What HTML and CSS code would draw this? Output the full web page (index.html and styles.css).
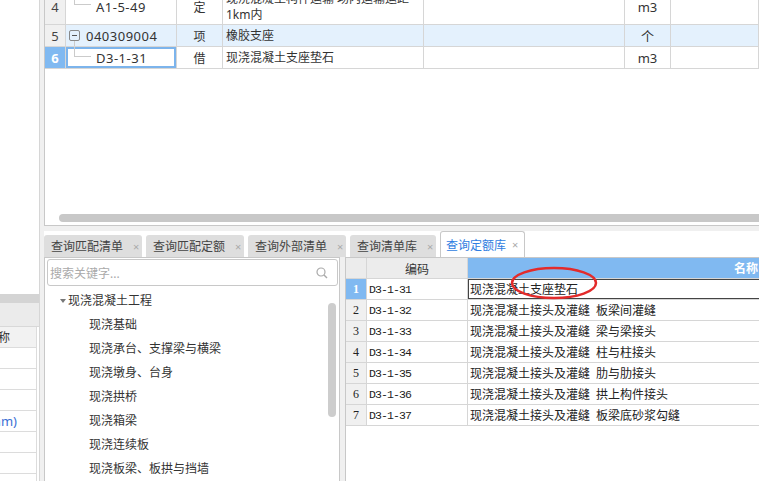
FILE: index.html
```html
<!DOCTYPE html>
<html lang="zh-CN">
<head>
  <meta charset="UTF-8">
  <meta name="viewport" content="width=device-width, initial-scale=1.0">
  <title>查询定额库</title>
  <link rel="stylesheet" href="styles.css">
</head>
<body>
  <div class="app">
    <!-- left property list, mostly scrolled off -->
    <aside class="side">
      <div class="side-top"></div>
      <div class="side-bar1"></div>
      <div class="side-bar2"></div>
      <div class="side-head"><span>名称</span></div>
      <div class="side-row"></div>
      <div class="side-row"></div>
      <div class="side-row"></div>
      <div class="side-row link"><span>(100mm)</span></div>
      <div class="side-row"></div>
      <div class="side-row"></div>
      <div class="side-row"></div>
    </aside>

    <main class="main">
      <!-- upper grid -->
      <section class="top-panel">
        <div class="rows">
          <div class="row tall">
            <div class="num">4</div>
            <div class="code"><span class="elbow"></span>A1-5-49</div>
            <div class="type">定</div>
            <div class="name">现浇混凝土构件运输 场内运输运距<br>1km内</div>
            <div></div>
            <div class="unit">m3</div>
            <div></div>
          </div>
          <div class="row hl">
            <div class="num">5</div>
            <div class="code"><span class="toggle"></span>040309004</div>
            <div class="type">项</div>
            <div class="name">橡胶支座</div>
            <div></div>
            <div class="unit">个</div>
            <div></div>
          </div>
          <div class="row cur">
            <div class="num">6</div>
            <div class="code sel"><span class="elbow"></span>D3-1-31</div>
            <div class="type">借</div>
            <div class="name">现浇混凝土支座垫石</div>
            <div></div>
            <div class="unit">m3</div>
            <div></div>
          </div>
        </div>
        <div class="hscroll"></div>
      </section>

      <!-- query tabs -->
      <nav class="tabs">
        <div class="tab">查询匹配清单<span class="x">×</span></div>
        <div class="tab">查询匹配定额<span class="x">×</span></div>
        <div class="tab">查询外部清单<span class="x">×</span></div>
        <div class="tab">查询清单库<span class="x">×</span></div>
        <div class="tab on">查询定额库<span class="x">×</span></div>
      </nav>

      <section class="bottom">
        <div class="tree-panel">
          <div class="search">
            <span>搜索关键字...</span>
            <svg width="12" height="12" viewBox="0 0 12 12">
              <circle cx="5" cy="5" r="4" fill="none" stroke="#aaa" stroke-width="1.2"/>
              <line x1="8" y1="8" x2="11" y2="11" stroke="#aaa" stroke-width="1.4"/>
            </svg>
          </div>
          <div class="tree-body">
            <ul class="tree">
              <li class="root"><span class="caret"></span>现浇混凝土工程</li>
              <li>现浇基础</li>
              <li>现浇承台、支撑梁与横梁</li>
              <li>现浇墩身、台身</li>
              <li>现浇拱桥</li>
              <li>现浇箱梁</li>
              <li>现浇连续板</li>
              <li>现浇板梁、板拱与挡墙</li>
            </ul>
            <div class="vscroll"></div>
          </div>
        </div>

        <div class="quota">
          <div class="qrow qhead">
            <div class="qnum"></div>
            <div class="qcode">编码</div>
            <div class="qname">名称</div>
          </div>
          <div class="qrow cur">
            <div class="qnum">1</div>
            <div class="qcode">D3-1-31</div>
            <div class="qname">现浇混凝土支座垫石</div>
          </div>
          <div class="qrow">
            <div class="qnum">2</div>
            <div class="qcode">D3-1-32</div>
            <div class="qname">现浇混凝土接头及灌缝&ensp;板梁间灌缝</div>
          </div>
          <div class="qrow">
            <div class="qnum">3</div>
            <div class="qcode">D3-1-33</div>
            <div class="qname">现浇混凝土接头及灌缝&ensp;梁与梁接头</div>
          </div>
          <div class="qrow">
            <div class="qnum">4</div>
            <div class="qcode">D3-1-34</div>
            <div class="qname">现浇混凝土接头及灌缝&ensp;柱与柱接头</div>
          </div>
          <div class="qrow">
            <div class="qnum">5</div>
            <div class="qcode">D3-1-35</div>
            <div class="qname">现浇混凝土接头及灌缝&ensp;肋与肋接头</div>
          </div>
          <div class="qrow">
            <div class="qnum">6</div>
            <div class="qcode">D3-1-36</div>
            <div class="qname">现浇混凝土接头及灌缝&ensp;拱上构件接头</div>
          </div>
          <div class="qrow">
            <div class="qnum">7</div>
            <div class="qcode">D3-1-37</div>
            <div class="qname">现浇混凝土接头及灌缝&ensp;板梁底砂浆勾缝</div>
          </div>

          <!-- red hand-drawn mark -->
          <svg class="mark" width="100" height="36" viewBox="0 0 100 36">
            <ellipse cx="49" cy="18" rx="42" ry="15" fill="none" stroke="#e32b2b" stroke-width="2.5"/>
          </svg>
        </div>
      </section>
    </main>
  </div>
</body>
</html>
```

FILE: styles.css
```css
body {
  margin: 0;
  width: 759px;
  height: 481px;
  overflow: hidden;
  background-color: #f0f0f0;
  font-family: "Noto Sans", "Noto Sans CJK SC", sans-serif;
  font-size: 12px;
  color: #333;
}

.app {
  display: flex;
  height: 481px;
}

/* left strip */
.side {
  width: 40px;
  flex: none;
  box-sizing: border-box;
  background-color: #fff;
  border-right: 1px solid #d6d6d6;
  display: flex;
  flex-direction: column;
  overflow: hidden;
}

.side > div {
  flex: none;
}

.side-top {
  height: 294px;
}

.side-bar1 {
  height: 9px;
  background-color: #d4d4d4;
}

.side-bar2 {
  height: 23px;
  background-color: #ebebeb;
  border-bottom: 1px solid #d8d8d8;
}

.side-head, .side-row {
  height: 20px;
  margin-right: 2px;
  border-right: 1px solid #dcdcdc;
  border-bottom: 1px solid #dcdcdc;
  display: flex;
  justify-content: flex-end;
  align-items: center;
  overflow: hidden;
  white-space: nowrap;
  padding-right: 26px;
}

.side-head {
  background-color: #f2f2f2;
}

.side-row.link {
  color: #3b6fd4;
  font-size: 13px;
  padding-right: 19px;
}

/* main column */
.main {
  flex: 1;
  min-width: 0;
  margin-left: 4px;
  display: flex;
  flex-direction: column;
}

.top-panel {
  height: 226px;
  flex: none;
  box-sizing: border-box;
  background-color: #fff;
  border-left: 1px solid #c8c8c8;
  border-bottom: 1px solid #c8c8c8;
  display: flex;
  flex-direction: column;
  overflow: hidden;
}

.rows {
  margin-top: -10px;
}

.row {
  display: grid;
  grid-template-columns: 21px 111px 46px 201px 201px 46px 1fr;
  height: 22px;
}

.row.tall {
  height: 35px;
}

.row > div {
  box-sizing: border-box;
  border-right: 1px solid #d6d6d6;
  border-bottom: 1px solid #d6d6d6;
  display: flex;
  align-items: center;
  overflow: hidden;
  white-space: nowrap;
}

.row .num {
  justify-content: center;
  background-color: #f0f0f0;
  font-size: 13px;
  color: #444;
}

.row.hl > div:not(.num) {
  background-color: #e4f1fd;
}

.row.cur .num {
  background-color: #80b9f1;
  color: #fff;
  font-weight: bold;
}

.row .code {
  font-size: 13px;
  letter-spacing: 0.5px;
}

.row .code.sel {
  box-shadow: inset 0 0 0 2px #7cb4ec;
}

.row .type, .row .unit {
  justify-content: center;
}

.row .unit {
  font-size: 13px;
}

.row .name {
  padding-left: 3px;
  line-height: 16px;
}

.elbow {
  align-self: flex-start;
  flex: none;
  width: 16px;
  height: 9px;
  margin: 0 5px 0 8px;
  border-left: 1px solid #cbcbcb;
  border-bottom: 1px solid #cbcbcb;
}

.tall .elbow {
  height: 14px;
}

.toggle {
  position: relative;
  flex: none;
  width: 11px;
  height: 11px;
  box-sizing: border-box;
  margin: 0 6px 0 3px;
  border: 1px solid #888;
  border-radius: 2px;
  display: flex;
  align-items: center;
  justify-content: center;
}

.toggle::before {
  content: "";
  width: 5px;
  height: 1px;
  background-color: #555;
}

.toggle::after {
  content: "";
  position: absolute;
  left: 4px;
  top: 10px;
  height: 6px;
  border-left: 1px solid #cbcbcb;
}

.hscroll {
  margin: auto 0 3px 14px;
  height: 8px;
  background-color: #c8c8c8;
  border-radius: 4px 0 0 4px;
}

/* tabs */
.tabs {
  height: 26px;
  flex: none;
  margin-top: 5px;
  background-color: #fff;
  display: flex;
  align-items: flex-end;
  gap: 4px;
}

.tab {
  height: 22px;
  box-sizing: border-box;
  padding: 0 3px 0 7px;
  background-color: #dedede;
  border-radius: 3px 3px 0 0;
  display: flex;
  align-items: center;
  white-space: nowrap;
  color: #444;
}

.tab .x {
  width: 6px;
  margin-left: 10px;
  color: #aaa;
  font-size: 11px;
  display: flex;
  justify-content: center;
}

.tab.on {
  height: 26px;
  padding: 0 6px 0 5px;
  background-color: #fff;
  border: 1px solid #c8c8c8;
  border-bottom: none;
  color: #2f7de1;
}

.tab.on .x {
  margin-left: 6px;
}

/* bottom area */
.bottom {
  flex: 1;
  min-height: 0;
  display: flex;
}

.tree-panel {
  width: 296px;
  flex: none;
  box-sizing: border-box;
  background-color: #fff;
  border: 1px solid #c8c8c8;
  border-bottom: none;
  display: flex;
  flex-direction: column;
}

.search {
  height: 27px;
  flex: none;
  box-sizing: border-box;
  margin: 1px 1px 0 2px;
  padding: 0 9px 0 2px;
  border: 1px solid #c8c8c8;
  border-radius: 3px;
  display: flex;
  align-items: center;
  justify-content: space-between;
  color: #aaa;
}

.tree-body {
  flex: 1;
  display: flex;
}

.tree {
  flex: 1;
  list-style: none;
  margin: 3px 0 0;
  padding: 0;
}

.tree li {
  height: 24px;
  line-height: 24px;
  padding-left: 44px;
  white-space: nowrap;
}

.tree li.root {
  padding-left: 15px;
  display: flex;
  align-items: center;
}

.caret {
  width: 0;
  height: 0;
  margin-right: 2px;
  border-left: 3.5px solid transparent;
  border-right: 3.5px solid transparent;
  border-top: 4px solid #777;
}

.vscroll {
  width: 8px;
  height: 114px;
  margin: 17px 3px 0 0;
  border-radius: 4px;
  background-color: #cdcdcd;
}

.quota {
  position: relative;
  flex: 1;
  min-width: 0;
  margin-left: 5px;
  background-color: #fff;
  border-left: 1px solid #c8c8c8;
  border-top: 1px solid #c8c8c8;
  overflow: hidden;
}

.qrow {
  display: grid;
  grid-template-columns: 21px 101px 554px;
  height: 21px;
}

.qrow > div {
  box-sizing: border-box;
  border-right: 1px solid #d6d6d6;
  border-bottom: 1px solid #d6d6d6;
  display: flex;
  align-items: center;
  overflow: hidden;
  white-space: nowrap;
  color: #222;
}

.qnum {
  justify-content: center;
  background-color: #f0f0f0;
  font-family: "Liberation Serif", serif;
  font-size: 12px;
}

.qcode {
  padding-left: 2px;
  font-family: "Liberation Mono", monospace;
  font-size: 11.5px;
  letter-spacing: -0.9px;
}

.qname {
  padding-left: 2px;
}

.qhead > div {
  background-color: #ececec;
}

.qhead .qcode {
  justify-content: center;
  padding-left: 0;
  font-family: "Noto Sans CJK SC", sans-serif;
  font-size: 12px;
  letter-spacing: 0;
  color: #333;
}

.qhead .qname {
  justify-content: center;
  background-color: #80b9f1;
  color: #fff;
  font-weight: bold;
  border-right: none;
}

.qrow.cur .qnum {
  background-color: #80b9f1;
  color: #fff;
  font-weight: bold;
}

.qrow.cur .qname {
  box-shadow: inset 0 0 0 1px #444;
}

.mark {
  position: absolute;
  left: 159px;
  top: 7px;
}
```
